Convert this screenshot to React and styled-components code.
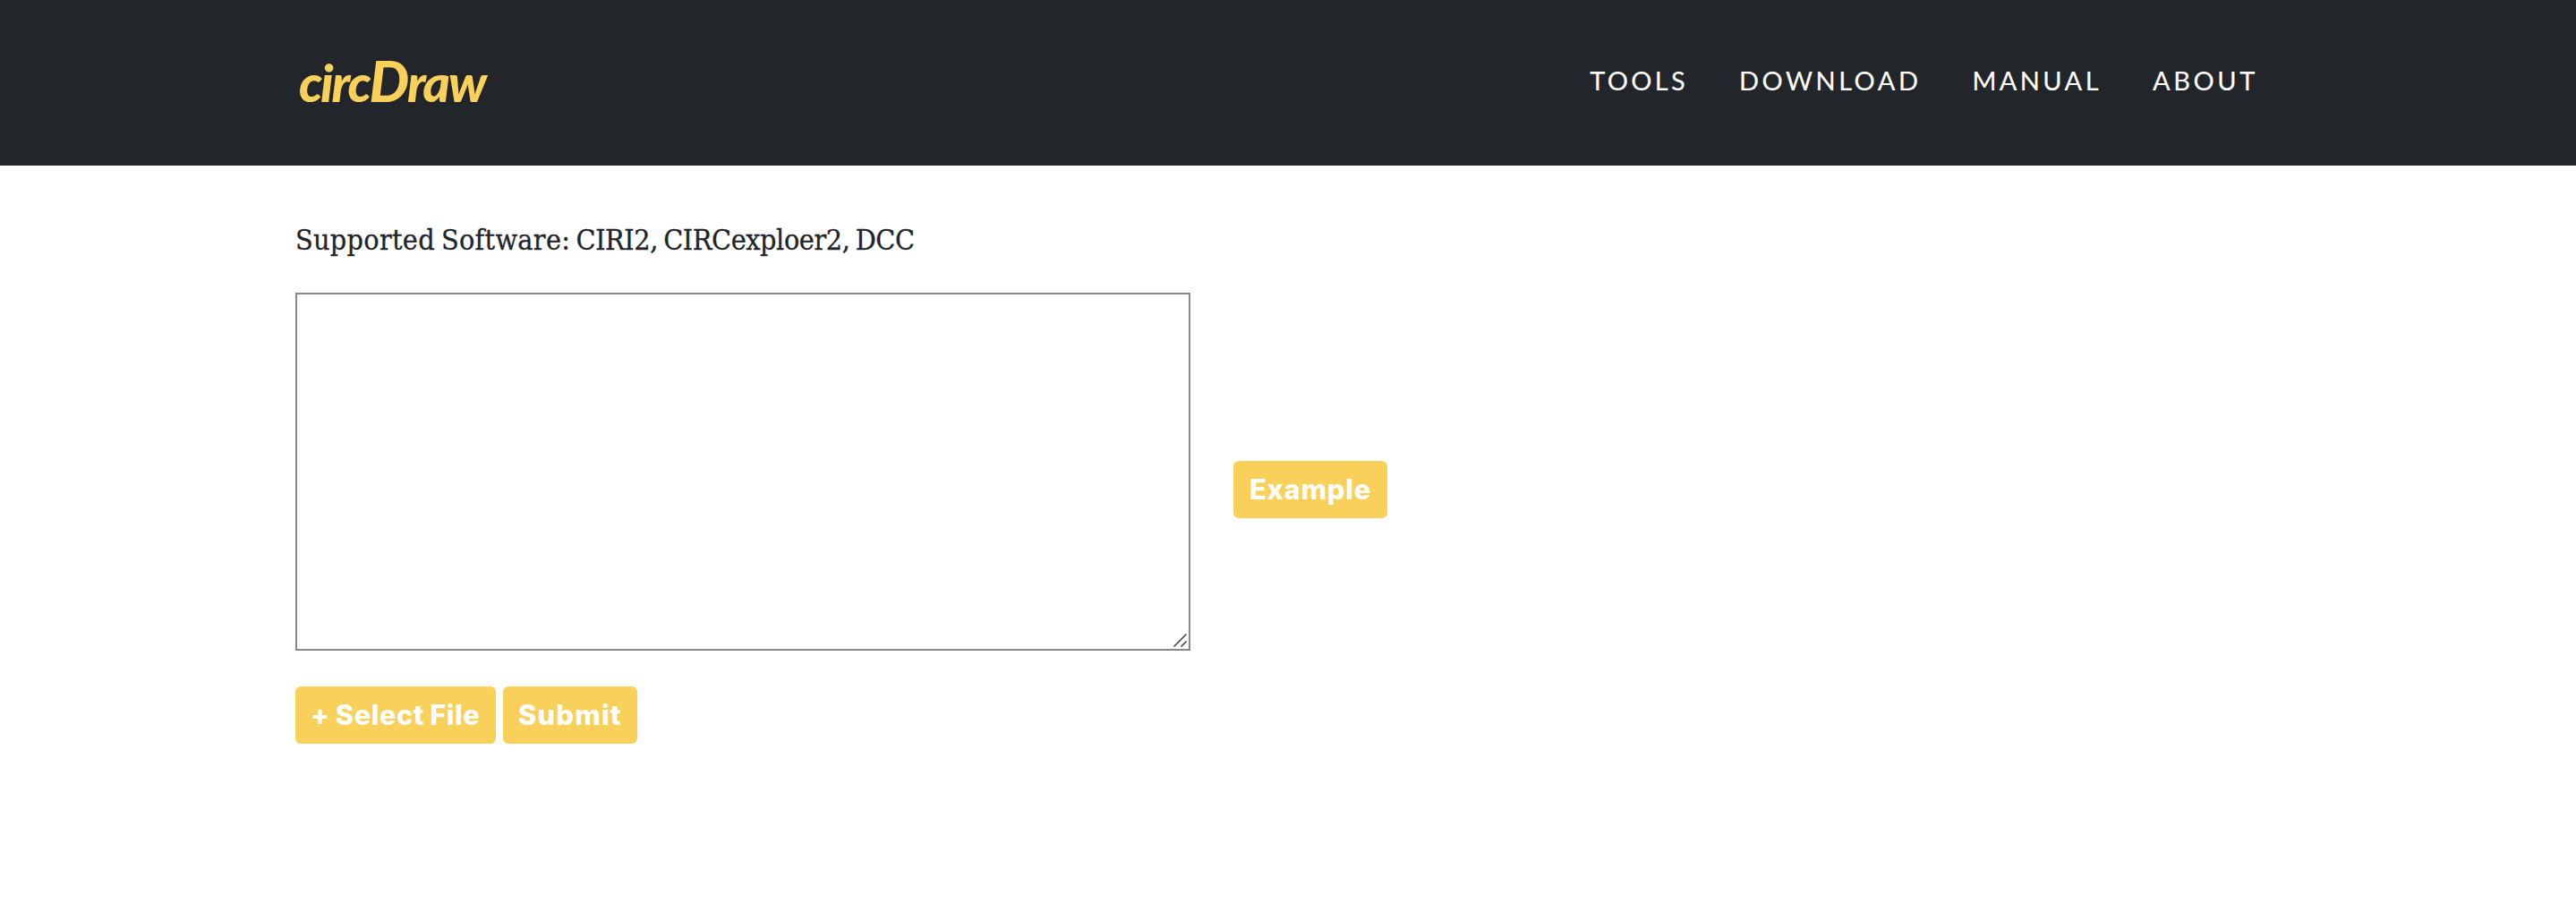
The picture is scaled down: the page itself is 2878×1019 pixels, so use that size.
import React from "react";
import styled, { createGlobalStyle } from "styled-components";

const GlobalStyle = createGlobalStyle`
  *, *::before, *::after { box-sizing: border-box; }
  body { margin: 0; background: #fff; color: #212529; }
`;

const Header = styled.header`
  display: flex;
  align-items: center;
  justify-content: space-between;
  height: 185px;
  padding: 0 355px 5px 334px;
  background: #222529;
`;

const Brand = styled.a`
  padding-top: 4px;
  font: italic 900 58px/70px Lato, sans-serif;
  letter-spacing: -2.2px;
  color: #f8d05a;
  white-space: nowrap;
`;

const BrandCapital = styled.span`
  font-size: 63px;
  line-height: 1;
`;

const Nav = styled.nav`
  display: flex;
  gap: 57px;
`;

const NavLink = styled.a`
  font: 400 29px/44px Lato, sans-serif;
  letter-spacing: ${(p) => p.$spacing}px;
  -webkit-text-stroke: 0.15px #fff;
  text-transform: uppercase;
  color: #fff;
`;

const Main = styled.main`
  padding: 59px 330px 0;
`;

const Lead = styled.p`
  margin: 0 0 35px;
  font: 32px/48px "DejaVu Serif Condensed", "DejaVu Serif", serif;
  letter-spacing: -0.42px;
  word-spacing: -2.4px;
  -webkit-text-stroke: 0.3px #212529;
  white-space: nowrap;
`;

const LeadLabel = styled.span`
  letter-spacing: 0.3px;
`;

const InputRow = styled.div`
  display: flex;
  align-items: center;
  gap: 48px;
  padding-bottom: 40px;
`;

const Editor = styled.div`
  display: grid;
  width: 1000px;
  height: 400px;
  border: 2px solid #888;
`;

const TextArea = styled.textarea`
  grid-area: 1 / 1;
  border: 0;
  padding: 4px;
  resize: none;
  outline: none;
  background: transparent;
  font: 26px "Liberation Mono", monospace;
`;

const Grip = styled.svg`
  grid-area: 1 / 1;
  place-self: end;
  width: 18px;
  height: 18px;
`;

const ExampleSlot = styled.div`
  padding-top: 40px;
`;

const Actions = styled.div`
  display: flex;
  gap: 8px;
`;

const Button = styled.button`
  width: ${(p) => p.$width}px;
  height: 64px;
  padding: 0 0 0 ${(p) => p.$inset}px;
  border: 0;
  border-radius: 6px;
  background: #f8d05a;
  color: #fff;
  font: 800 30.8px/62px Inter, sans-serif;
  letter-spacing: ${(p) => p.$spacing}px;
  word-spacing: -1px;
  text-align: left;
  white-space: nowrap;
`;

const links = [
  ["Tools", 3.3],
  ["Download", 3.5],
  ["Manual", 3.4],
  ["About", 3.6],
];

export default function App() {
  return (
    <>
      <GlobalStyle />
      <Header>
        <Brand>
          circ<BrandCapital>D</BrandCapital>raw
        </Brand>
        <Nav>
          {links.map(([label, spacing]) => (
            <NavLink key={label} $spacing={spacing}>{label}</NavLink>
          ))}
        </Nav>
      </Header>
      <Main>
        <Lead>
          <LeadLabel>Supported Software:</LeadLabel> CIRI2, CIRCexploer2, DCC
        </Lead>
        <InputRow>
          <Editor>
            <TextArea />
            <Grip viewBox="0 0 18 18" fill="none" stroke="#444" strokeWidth="1.6">
              <path d="M1.5 15.5 15.5 1.5M9.5 15.5l6-6" />
            </Grip>
          </Editor>
          <ExampleSlot>
            <Button $width={172} $inset={18} $spacing={0.8}>Example</Button>
          </ExampleSlot>
        </InputRow>
        <Actions>
          <Button $width={224} $inset={17} $spacing={0.5}>+ Select File</Button>
          <Button $width={150} $inset={17} $spacing={1.2}>Submit</Button>
        </Actions>
      </Main>
    </>
  );
}
